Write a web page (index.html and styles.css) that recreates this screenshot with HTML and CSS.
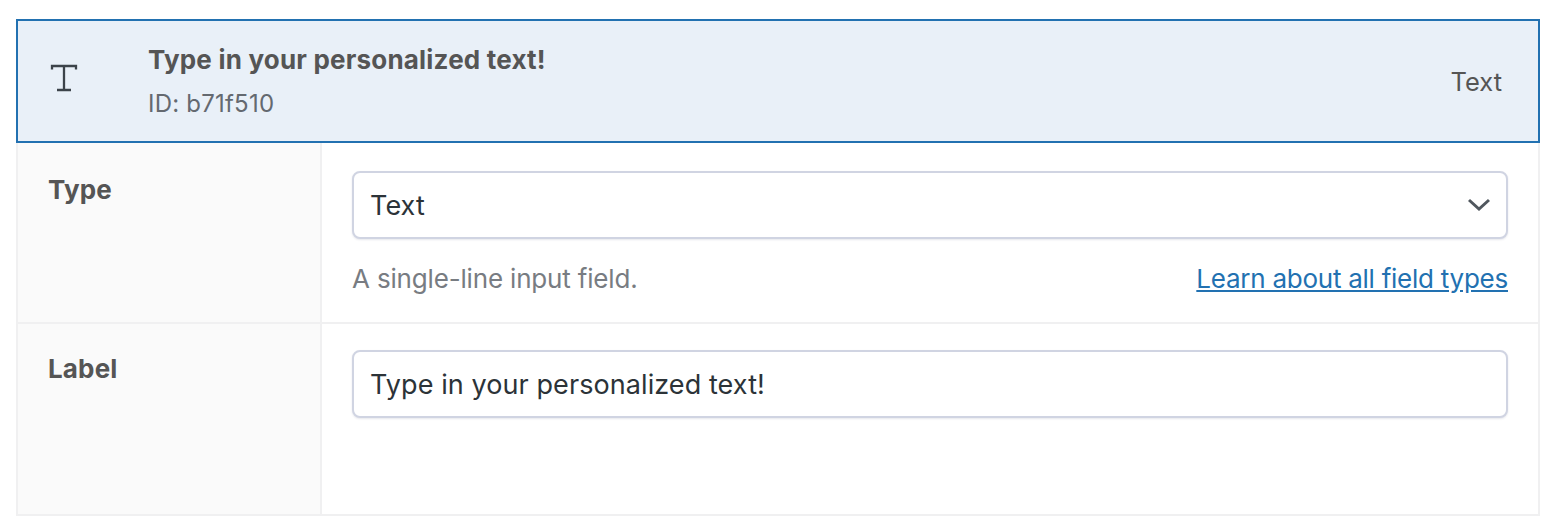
FILE: index.html
```html
<!DOCTYPE html>
<html lang="en">
<head>
    <meta charset="UTF-8">
    <title>Field settings</title>
    <link rel="stylesheet" href="styles.css">
</head>
<body>
    <div class="field">
        <div class="field-header">
            <div class="field-icon">
                <svg width="28" height="28" viewBox="0 0 28 28" fill="none" stroke="#3c434a" stroke-width="2.3">
                    <path d="M2 5.5V2H26V5.5"/>
                    <path d="M14 2V26M7 26H21"/>
                </svg>
            </div>
            <div class="field-title">
                <div class="field-name">Type in your personalized text!</div>
                <div class="field-id">ID: b71f510</div>
            </div>
            <div class="field-kind">Text</div>
        </div>
        <div class="row row-type">
            <div class="row-label">Type</div>
            <div class="row-body">
                <div class="select-wrap">
                    <select class="control">
                        <option>Text</option>
                    </select>
                    <svg class="chevron" width="22" height="14" viewBox="0 0 22 14" fill="none" stroke="#50575e" stroke-width="3">
                        <path d="M1 2L11 11L21 2"/>
                    </svg>
                </div>
                <div class="hint">
                    <span>A single-line input field.</span>
                    <a href="#">Learn about all field types</a>
                </div>
            </div>
        </div>
        <div class="row row-name">
            <div class="row-label">Label</div>
            <div class="row-body">
                <input class="control" type="text" value="Type in your personalized text!">
            </div>
        </div>
    </div>
</body>
</html>
```

FILE: styles.css
```css
body {
    margin: 0;
    padding: 19px 26px 0 16px;
    background-color: #fff;
    font-family: Inter, "Noto Sans", sans-serif;
    color: #555;
}

.field-header {
    display: flex;
    align-items: center;
    height: 124px;
    box-sizing: border-box;
    border: 2px solid #2271b1;
    background-color: #e9f0f8;
}

.field-icon {
    display: flex;
    width: 130px;
    padding: 0 0 6px 32px;
    box-sizing: border-box;
}

.field-title {
    flex: 1;
    padding-top: 2px;
}

.field-name {
    font-size: 26px;
    font-weight: 700;
    line-height: 32px;
    letter-spacing: 0.2px;
}

.field-id {
    margin-top: 12px;
    font-size: 24px;
    line-height: 32px;
    letter-spacing: 0.22px;
    color: #646970;
}

.field-kind {
    padding-right: 36px;
    font-size: 25.5px;
}

.row {
    display: flex;
    box-sizing: border-box;
    border-left: 2px solid #f0f0f1;
    border-right: 2px solid #f0f0f1;
    border-bottom: 2px solid #f0f0f1;
}

.row-type {
    height: 181px;
}

.row-name {
    height: 192px;
}

.row-label {
    width: 304px;
    padding: 31px 0 0 30px;
    box-sizing: border-box;
    background-color: #fafafa;
    border-right: 2px solid #f0f0f1;
    font-size: 26px;
    font-weight: 700;
    line-height: 32px;
    letter-spacing: 0.16px;
}

.row-body {
    flex: 1;
    padding: 28px 30px 0;
}

.row-name .row-body {
    padding-top: 26px;
}

.row-name .row-label {
    padding-top: 29px;
}

.select-wrap {
    position: relative;
}

.chevron {
    position: absolute;
    top: 27px;
    right: 18px;
}

.control {
    display: block;
    width: 100%;
    height: 68px;
    box-sizing: border-box;
    padding: 0 16px;
    appearance: none;
    background-color: #fff;
    border: 2px solid #d0d4e2;
    border-radius: 8px;
    box-shadow: 0 1px 2px rgba(50, 60, 100, 0.12);
    font-family: inherit;
    font-size: 27px;
    letter-spacing: 0.08px;
    color: #2c3338;
}

.hint {
    display: flex;
    justify-content: space-between;
    margin-top: 24px;
    font-size: 26px;
    line-height: 32px;
    letter-spacing: -0.17px;
    color: #787c82;
}

.hint a {
    letter-spacing: -0.25px;
    color: #2271b1;
}
```
